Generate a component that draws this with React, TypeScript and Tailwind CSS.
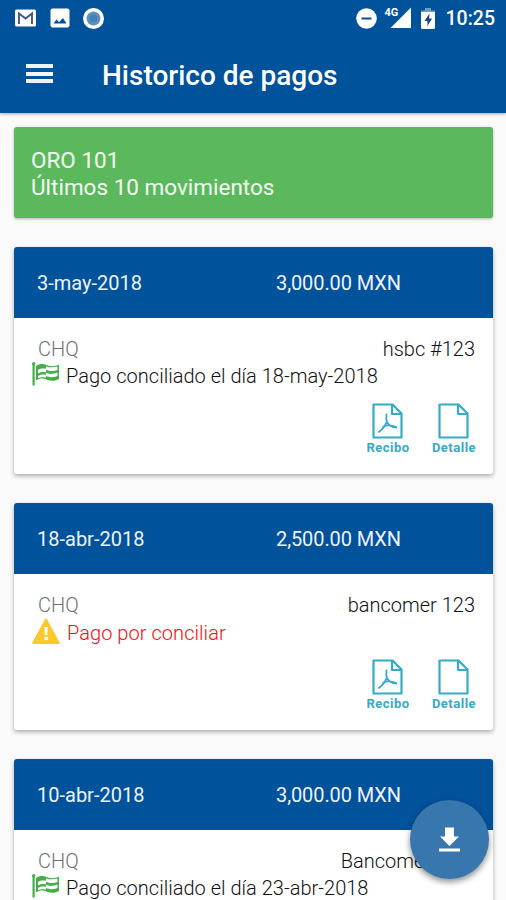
import React from "react";

interface Pago {
  fecha: string;
  monto: string;
  tipo: string;
  banco: string;
  conciliado: boolean;
  mensaje: string;
}

const pagos: Pago[] = [
  {
    fecha: "3-may-2018",
    monto: "3,000.00 MXN",
    tipo: "CHQ",
    banco: "hsbc #123",
    conciliado: true,
    mensaje: "Pago conciliado el día 18-may-2018",
  },
  {
    fecha: "18-abr-2018",
    monto: "2,500.00 MXN",
    tipo: "CHQ",
    banco: "bancomer 123",
    conciliado: false,
    mensaje: "Pago por conciliar",
  },
  {
    fecha: "10-abr-2018",
    monto: "3,000.00 MXN",
    tipo: "CHQ",
    banco: "Bancomer -123",
    conciliado: true,
    mensaje: "Pago conciliado el día 23-abr-2018",
  },
];

const FlagIcon: React.FC = () => (
  <svg width="28" height="24" viewBox="0 0 28 24" className="mb-[5px] shrink-0">
    <path d="M1.600 1v22.500" stroke="#45ae49" strokeWidth="2.200" />
    <circle cx="1.700" cy="1.600" r="1.600" fill="#45ae49" />
    <path
      d="M4 4C8 1.200 11 1.600 15 3.200s8 1.200 12-.7v14.500c-4 2.200-8 2.400-12 .8s-7-1.800-11 .8z"
      fill="#45ae49"
    />
    <path
      d="M6 8c3-1.800 5-1.900 8-1.200v3.600c-3-.7-5.500-.2-8 1.100zM14 4.400c3 .7 5 1.600 11.500.2v3.500C20 10 17 8.800 14 7.700zM6 14.200c3-1.800 5-1.900 8-1.200v2.600c-3-.7-5.500-.6-8 .5zM14 10.800c3 1 5 2.200 11.500-.2v3.400c-5 2-8.500 1-11.500 0z"
      fill="#fff"
    />
  </svg>
);

const WarningIcon: React.FC = () => (
  <svg width="28" height="26" viewBox="0 0 28 26" className="mb-[4px] shrink-0">
    <path
      d="M14 1.500L26.800 25H1.200z"
      fill="#fac92c"
      stroke="#fac92c"
      strokeWidth="2"
      strokeLinejoin="round"
    />
    <path d="M12.300 9h3.500l-.5 8h-2.500zM12.400 18.700h3.300v3.300h-3.300z" fill="#fff" />
  </svg>
);

const FileIcon: React.FC<{ pdf?: boolean }> = ({ pdf }) => (
  <svg
    width="31"
    height="36"
    viewBox="0 0 31 36"
    fill="none"
    stroke="#36aac9"
    strokeWidth="2.200"
    strokeLinejoin="round"
    className="mr-[2px]"
  >
    <path d="M1.500 1.500h19L29.500 10.500v24h-28z" />
    <path d="M20 1.500v9.500h9.500" />
    {pdf && (
      <path
        d="M14.500 11.500c-.6 3.500-.2 6 .8 8 1.700 3 4.500 5 9 5M14.800 18.500c-1.300 4-4.300 8-8 10.500M11 23.800c3.500-1.800 8-1.800 13.300.2"
        strokeWidth="1.800"
        strokeLinecap="round"
      />
    )}
  </svg>
);

const StatusBar: React.FC = () => (
  <div className="flex h-[36px] items-center justify-between pl-[15px] pr-[11px]">
    <div className="flex items-center gap-[13.500px]">
      <svg width="21" height="18" viewBox="0 0 21 18">
        <rect y=".5" width="21" height="17" rx="1.500" fill="#fff" />
        <path d="M4 15V4.500l6.500 5 6.500-5V15" fill="none" stroke="#3d5796" strokeWidth="1.900" />
      </svg>
      <svg width="20" height="20" viewBox="0 0 20 20">
        <rect x=".5" y=".5" width="19" height="19" rx="2" fill="#fff" />
        <path d="M3.500 15.500l3-4 2.500 2.800 4-4.300 3.500 5.500z" fill="#00529b" />
      </svg>
      <svg width="21" height="21" viewBox="0 0 21 21">
        <circle cx="10.500" cy="10.500" r="10.500" fill="#fff" />
        <circle cx="10.500" cy="10.500" r="7" fill="#5f91bf" />
        <circle cx="10.500" cy="10.500" r="4" fill="#4581b5" />
      </svg>
    </div>
    <div className="flex items-center">
      <svg width="21" height="21" viewBox="0 0 21 21">
        <circle cx="10.500" cy="10.500" r="10.300" fill="#fff" />
        <path d="M5.500 10.500h10" stroke="#00529b" strokeWidth="2" />
      </svg>
      <div className="relative ml-[10px] h-[22px] w-[24px]">
        <svg width="24" height="22" viewBox="0 0 24 22">
          <path d="M24 .5v20.500H3.500z" fill="#fff" />
        </svg>
        <span className="absolute -left-[2px] top-0 text-[11px] leading-[11px] font-bold">4G</span>
      </div>
      <svg width="14" height="21" viewBox="0 0 14 21" className="ml-[10px]">
        <path d="M4 0h6v2.500h4V6H0V2.500h4z" fill="#6f9dc7" />
        <path d="M0 4h14v15.500a1.500 1.500 0 0 1-1.500 1.500h-11A1.500 1.500 0 0 1 0 19.500z" fill="#fff" />
        <path d="M8.500 5.500L3.500 13h3v5L11 10.500H8z" fill="#173f8c" />
      </svg>
      <span className="mt-[2px] ml-[11px] text-[19.500px] leading-[22px] font-medium">10:25</span>
    </div>
  </div>
);

const PagoCard: React.FC<{ pago: Pago }> = ({ pago }) => (
  <div className="h-[227px] overflow-hidden rounded-[3px] bg-white shadow-[0_2px_4px_rgba(0,0,0,0.32)]">
    <div className="flex h-[71px] items-center bg-[#00529b] pl-[23px] text-[20px] text-[#edf2ff]">
      <span className="w-[239px]">{pago.fecha}</span>
      <span className="tracking-[-0.1px]">{pago.monto}</span>
    </div>

    <div className="pt-[18px] pl-[18px] pr-[18px] text-[20px] leading-[27px]">
      <div className="flex justify-between pl-[6px] font-light">
        <span className="text-[#707070]">{pago.tipo}</span>
        <span className="text-[#111]">{pago.banco}</span>
      </div>
      <div className="flex h-[27px] items-center gap-[6px] font-light">
        {pago.conciliado ? <FlagIcon /> : <WarningIcon />}
        {pago.conciliado ? (
          <span className="tracking-[0.02px] text-[#111]">{pago.mensaje}</span>
        ) : (
          <span className="mt-[2px] ml-[1px] tracking-[0.05px] text-[#ee1111]">{pago.mensaje}</span>
        )}
      </div>
    </div>

    {/* Acciones */}
    <div className="mt-[13px] flex justify-end gap-[22px] pr-[17px] text-[13px] leading-[18px] font-bold tracking-[0.5px] text-[#36aac9]">
      <button className="flex w-[44px] flex-col items-center">
        <FileIcon pdf />
        <span>Recibo</span>
      </button>
      <button className="flex w-[44px] flex-col items-center">
        <FileIcon />
        <span>Detalle</span>
      </button>
    </div>
  </div>
);

const App: React.FC = () => {
  return (
    <div className="relative h-[900px] w-full overflow-hidden bg-[#fafafa] font-['Roboto',sans-serif] whitespace-nowrap">
      {/* Encabezado */}
      <header className="h-[113px] bg-[#00529b] text-white shadow-[0_1px_3px_rgba(0,0,0,0.35)]">
        <StatusBar />
        <div className="flex h-[77px] items-center pl-[26px]">
          <button className="mb-[2px] flex w-[27px] flex-col gap-[3.500px]">
            <span className="h-[4px] bg-[#eef2fa]" />
            <span className="h-[4px] bg-[#eef2fa]" />
            <span className="h-[4px] bg-[#eef2fa]" />
          </button>
          <h1 className="mt-[2px] ml-[49px] text-[28px] font-medium">Historico de pagos</h1>
        </div>
      </header>

      <main className="flex flex-col gap-[29px] pt-[14px] pl-[14px] pr-[13px]">
        <div className="h-[91px] rounded-[3px] bg-[#5cb85c] pt-[20px] pl-[17px] text-[22.500px] leading-[27px] text-[#f2fff2] shadow-[0_1px_3px_rgba(0,0,0,0.3)]">
          <p>ORO 101</p>
          <p>Últimos 10 movimientos</p>
        </div>

        {pagos.map((pago) => (
          <PagoCard key={pago.fecha} pago={pago} />
        ))}
      </main>

      {/* Botón de descarga */}
      <button className="absolute top-[800px] left-[410px] flex h-[79px] w-[79px] items-center justify-center rounded-full bg-[#3777ae] shadow-[0_3px_6px_rgba(0,0,0,0.45)]">
        <svg width="21" height="26" viewBox="0 0 21 26" fill="#fff">
          <path d="M6 .5h9v9h5L10.500 19 1 9.500h5z" />
          <path d="M0 21.500h21v3H0z" />
        </svg>
      </button>
    </div>
  );
};

export default App;
